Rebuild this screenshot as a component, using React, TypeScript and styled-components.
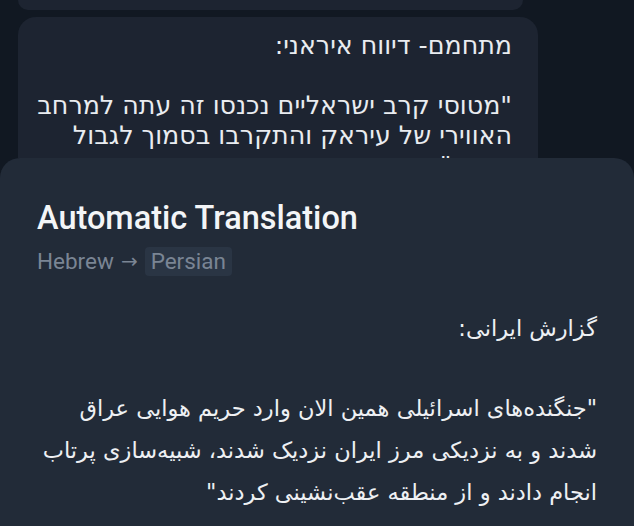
import React from "react";
import styled, { createGlobalStyle } from "styled-components";

const Global = createGlobalStyle`
  html, body { margin: 0; padding: 0; background: #111822; }
  body { width: 634px; height: 526px; overflow: hidden; font-family: "Roboto", "Noto Sans", "DejaVu Sans", sans-serif; }
`;

const Screen = styled.div`
  width: 634px;
  height: 526px;
  display: flex;
  flex-direction: column;
  background: #111822;
  overflow: hidden;
`;

const Chat = styled.div`
  height: 158px;
  flex: none;
  display: flex;
  flex-direction: column;
  gap: 7px;
  overflow: hidden;
  padding-left: 18px;
`;

const PrevBubble = styled.div`
  width: 505px;
  height: 10px;
  flex: none;
  background: #1d2431;
  border-radius: 0 0 16px 16px;
`;

const Bubble = styled.div`
  width: 520px;
  flex: none;
  box-sizing: border-box;
  background: #1d2431;
  border-radius: 18px;
  padding: 14px 26px 20px 20px;
  direction: rtl;
  text-align: right;
  color: #e9ecf0;
  font-family: "DejaVu Sans", "Noto Sans", sans-serif;
  font-size: 25.3px;
  line-height: 30px;
`;

const Line = styled.p<{ $gap?: number }>`
  margin: 0;
  white-space: nowrap;
  margin-top: ${(p) => p.$gap ?? 0}px;
`;

const Sheet = styled.div`
  flex: 1;
  background: #222b38;
  border-radius: 20px 20px 0 0;
  padding: 41px 37px 0 37px;
  display: flex;
  flex-direction: column;
`;

const Title = styled.h1`
  margin: 0;
  color: #f3f5f7;
  font-family: "Roboto", sans-serif;
  font-weight: 500;
  font-size: 32.5px;
  line-height: 38px;
`;

const Langs = styled.div`
  margin-top: 10px;
  display: flex;
  align-items: center;
  gap: 7px;
  color: #7a8594;
  font-family: "Roboto", sans-serif;
  font-size: 22.5px;
  line-height: 29px;
`;

const Arrow = styled.span`
  font-family: "DejaVu Sans", sans-serif;
  font-size: 20px;
`;

const LangChip = styled.span`
  background: #2a3544;
  border-radius: 4px;
  padding: 0 6px;
`;

const Translated = styled.div`
  margin-top: 31px;
  direction: rtl;
  text-align: right;
  color: #eef0f3;
  font-family: "DejaVu Sans", "Noto Sans", sans-serif;
  font-size: 22.5px;
  line-height: 42px;
`;

export default function App() {
  return (
    <Screen>
      <Global />
      <Chat>
        <PrevBubble />
        <Bubble>
          <Line>מתחמם- דיווח איראני:</Line>
          <Line $gap={30}>"מטוסי קרב ישראליים נכנסו זה עתה למרחב</Line>
          <Line>האווירי של עיראק והתקרבו בסמוך לגבול</Line>
          <Line>איראן"</Line>
        </Bubble>
      </Chat>
      <Sheet>
        <Title>Automatic Translation</Title>
        <Langs>
          <span>Hebrew</span>
          <Arrow>→</Arrow>
          <LangChip>Persian</LangChip>
        </Langs>
        <Translated>
          <Line>گزارش ایرانی:</Line>
          <Line $gap={38}>"جنگنده‌های اسرائیلی همین الان وارد حریم هوایی عراق</Line>
          <Line>شدند و به نزدیکی مرز ایران نزدیک شدند، شبیه‌سازی پرتاب</Line>
          <Line>انجام دادند و از منطقه عقب‌نشینی کردند"</Line>
        </Translated>
      </Sheet>
    </Screen>
  );
}
